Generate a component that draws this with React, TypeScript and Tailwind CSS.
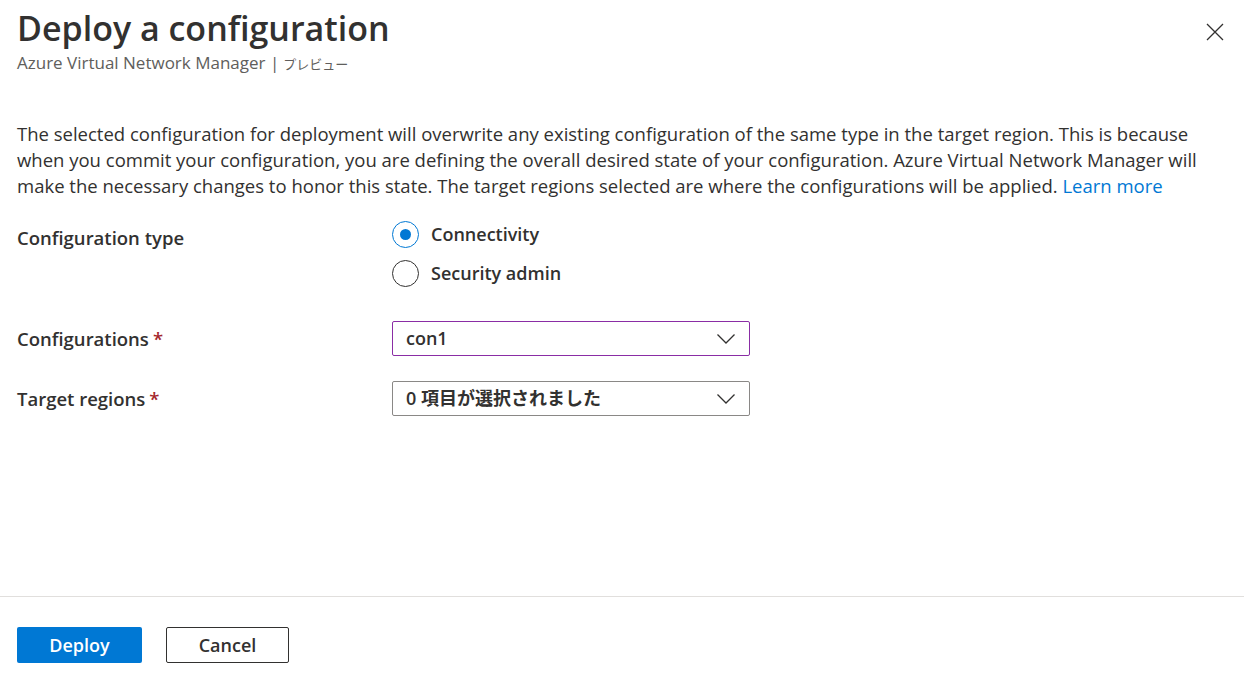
import React, { useState } from "react";

const font = "font-['Open_Sans','Noto_Sans_CJK_JP',sans-serif]";

const Chevron = () => (
  <svg width="20" height="12" viewBox="0 0 20 12" fill="none" className="text-[#323130]">
    <path d="M1.5 1.5L10 10L18.5 1.5" stroke="currentColor" strokeWidth="1.3" />
  </svg>
);

type RadioProps = {
  label: string;
  checked: boolean;
  onSelect: () => void;
};

const Radio: React.FC<RadioProps> = ({ label, checked, onSelect }: RadioProps) => (
  <button type="button" onClick={onSelect} className="flex items-center gap-3 h-[37px] text-left">
    <span
      className={`w-[27px] h-[27px] rounded-full border flex items-center justify-center ${
        checked ? "border-[#0078d4]" : "border-[#323130]"
      }`}
    >
      {checked && <span className="w-[11px] h-[11px] rounded-full bg-[#0078d4]" />}
    </span>
    <span className="text-[18px] font-semibold text-[#323130]">{label}</span>
  </button>
);

type SelectProps = {
  value: string;
  focused?: boolean;
};

const Dropdown: React.FC<SelectProps> = ({ value, focused }: SelectProps) => (
  <div
    className={`w-[358px] h-[35px] rounded-[2px] border flex items-center justify-between pl-[13px] pr-[13px] ${
      focused ? "border-[#8a2da5]" : "border-[#8a8886]"
    }`}
  >
    <span className="text-[18px] font-semibold text-[#323130]">{value}</span>
    <Chevron />
  </div>
);

const Required = () => <span className="text-[#a4262c] ml-1">*</span>;

export default function App() {
  const [type, setType] = useState("connectivity");

  return (
    <div className={`${font} w-[1244px] h-[677px] bg-white flex flex-col text-[#323130]`}>
      <div className="flex-1 px-[17px]">
        <div className="flex justify-between items-start pt-[6px]">
          <div>
            <h1 className="text-[34px] font-semibold leading-[44px] text-[#323130]">Deploy a configuration</h1>
            <div className="text-[17px] leading-[22px] text-[#605e5c] mt-[2px]">
              Azure Virtual Network Manager |<span className="text-[13px] ml-[4px]">プレビュー</span>
            </div>
          </div>
          <button type="button" className="mt-[14px] mr-0 p-[3px]">
            <svg width="18" height="18" viewBox="0 0 18 18" className="text-[#323130]">
              <path d="M1 1L17 17M17 1L1 17" stroke="currentColor" strokeWidth="1.3" />
            </svg>
          </button>
        </div>

        <p className="mt-[46px] text-[18.5px] leading-[26px] text-[#323130]">
          <span className="block">
            The selected configuration for deployment will overwrite any existing configuration of the same type in the target region. This is because
          </span>
          <span className="block">
            when you commit your configuration, you are defining the overall desired state of your configuration. Azure Virtual Network Manager will
          </span>
          <span className="block">
            make the necessary changes to honor this state. The target regions selected are where the configurations will be applied.{" "}
            <a href="#" className="text-[#0078d4]">
              Learn more
            </a>
          </span>
        </p>

        <div className="mt-[17px] grid grid-cols-[375px_1fr] items-start">
          <div className="text-[18.5px] font-semibold pt-[8px]">Configuration type</div>
          <div className="flex flex-col gap-[2px]">
            <Radio label="Connectivity" checked={type === "connectivity"} onSelect={() => setType("connectivity")} />
            <Radio label="Security admin" checked={type === "security"} onSelect={() => setType("security")} />
          </div>
        </div>

        <div className="mt-[29px] grid grid-cols-[375px_1fr] items-center">
          <div className="text-[18.5px] font-semibold">
            Configurations
            <Required />
          </div>
          <Dropdown value="con1" focused />
        </div>

        <div className="mt-[25px] grid grid-cols-[375px_1fr] items-center">
          <div className="text-[18.5px] font-semibold">
            Target regions
            <Required />
          </div>
          <Dropdown value="0 項目が選択されました" />
        </div>
      </div>

      <div className="border-t border-[#e1dfdd] h-[81px] px-[17px] pt-[30px] flex items-start gap-[24px]">
        <button type="button" className="w-[125px] h-[36px] rounded-[2px] bg-[#0078d4] text-white text-[18px] font-semibold">
          Deploy
        </button>
        <button
          type="button"
          className="w-[123px] h-[36px] rounded-[2px] border border-[#323130] bg-white text-[#323130] text-[18px] font-semibold"
        >
          Cancel
        </button>
      </div>
    </div>
  );
}
